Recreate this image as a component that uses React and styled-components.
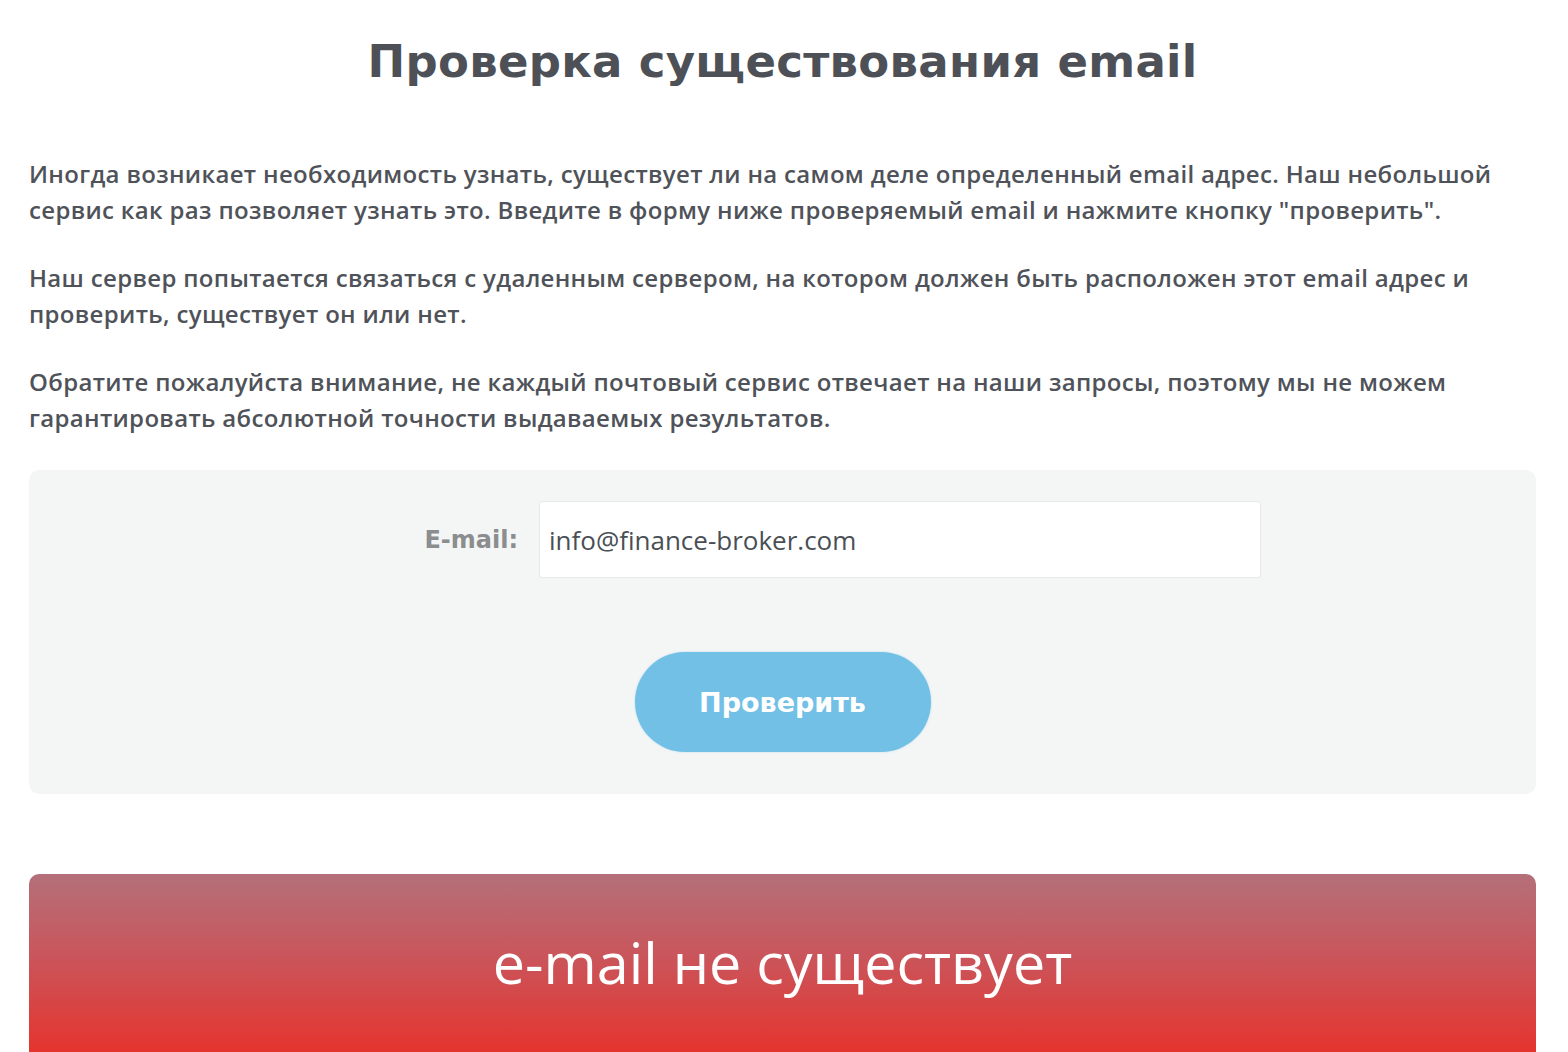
import React from "react";
import styled, { createGlobalStyle } from "styled-components";

const Global = createGlobalStyle`
  html, body { margin: 0; padding: 0; background: #ffffff; }
  body { font-family: "Open Sans", "Noto Sans", sans-serif; color: #4d5157; }
  * { box-sizing: border-box; }
`;

const Page = styled.div`
  width: 1568px;
  padding: 34px 32px 0 29px;
  display: flex;
  flex-direction: column;
`;

const Title = styled.h1`
  margin: 0;
  text-align: center;
  font-family: "DejaVu Sans", "Noto Sans", sans-serif;
  font-weight: 700;
  font-size: 45px;
  line-height: 56px;
  color: #4d5157;
  letter-spacing: 0.3px;
`;

const Text = styled.p`
  margin: 0;
  font-family: "Open Sans", "Noto Sans", sans-serif;
  font-weight: 600;
  font-size: 24px;
  line-height: 36px;
  letter-spacing: 0.33px;
  color: #4f5359;
  & + & { margin-top: 32px; }
`;

const Intro = styled.div`
  margin-top: 66px;
`;

const FormBox = styled.form`
  margin-top: 34px;
  background: #f4f6f6;
  border-radius: 10px;
  padding: 31px 0 42px;
  display: flex;
  flex-direction: column;
  align-items: center;
`;

const Row = styled.div`
  display: flex;
  align-items: center;
  gap: 21px;
  margin-left: 369px;
  align-self: flex-start;
`;

const Label = styled.label`
  font-family: "DejaVu Sans", sans-serif;
  font-weight: 700;
  font-size: 24px;
  color: #8b8d8f;
  width: 120px;
  text-align: right;
`;

const Input = styled.input`
  width: 722px;
  height: 77px;
  background: #fff;
  border: 1px solid #e6e8e9;
  border-radius: 3px;
  padding: 0 9px;
  font-family: "Open Sans", sans-serif;
  font-weight: 500;
  font-size: 26px;
  color: #4a4f55;
  outline: none;
`;

const Button = styled.button`
  margin-top: 74px;
  width: 296px;
  height: 100px;
  border: none;
  border-radius: 50px;
  background: #72c0e6;
  color: #fff;
  font-family: "DejaVu Sans", sans-serif;
  font-weight: 700;
  font-size: 27px;
  box-shadow: 0 0 2px rgba(114, 192, 230, 0.5);
`;

const Result = styled.div`
  margin-top: 80px;
  height: 178px;
  border-radius: 10px 10px 0 0;
  background: linear-gradient(180deg, #b47079 0%, #c9565c 45%, #e5342e 100%);
  display: flex;
  justify-content: center;
  padding-top: 53px;
`;

const ResultText = styled.div`
  font-family: "Open Sans", sans-serif;
  font-weight: 500;
  font-size: 57.5px;
  line-height: 70px;
  color: #fff;
`;

export default function App() {
  return (
    <Page>
      <Global />
      <Title>Проверка существования email</Title>
      <Intro>
        <Text>
          Иногда возникает необходимость узнать, существует ли на самом деле определенный email адрес. Наш небольшой
          <br />
          сервис как раз позволяет узнать это. Введите в форму ниже проверяемый email и нажмите кнопку "проверить".
        </Text>
        <Text>
          Наш сервер попытается связаться с удаленным сервером, на котором должен быть расположен этот email адрес и
          <br />
          проверить, существует он или нет.
        </Text>
        <Text>
          Обратите пожалуйста внимание, не каждый почтовый сервис отвечает на наши запросы, поэтому мы не можем
          <br />
          гарантировать абсолютной точности выдаваемых результатов.
        </Text>
      </Intro>
      <FormBox onSubmit={(e) => e.preventDefault()}>
        <Row>
          <Label htmlFor="email">E-mail:</Label>
          <Input id="email" type="text" defaultValue="info@finance-broker.com" />
        </Row>
        <Button type="submit">Проверить</Button>
      </FormBox>
      <Result>
        <ResultText>e-mail не существует</ResultText>
      </Result>
    </Page>
  );
}
